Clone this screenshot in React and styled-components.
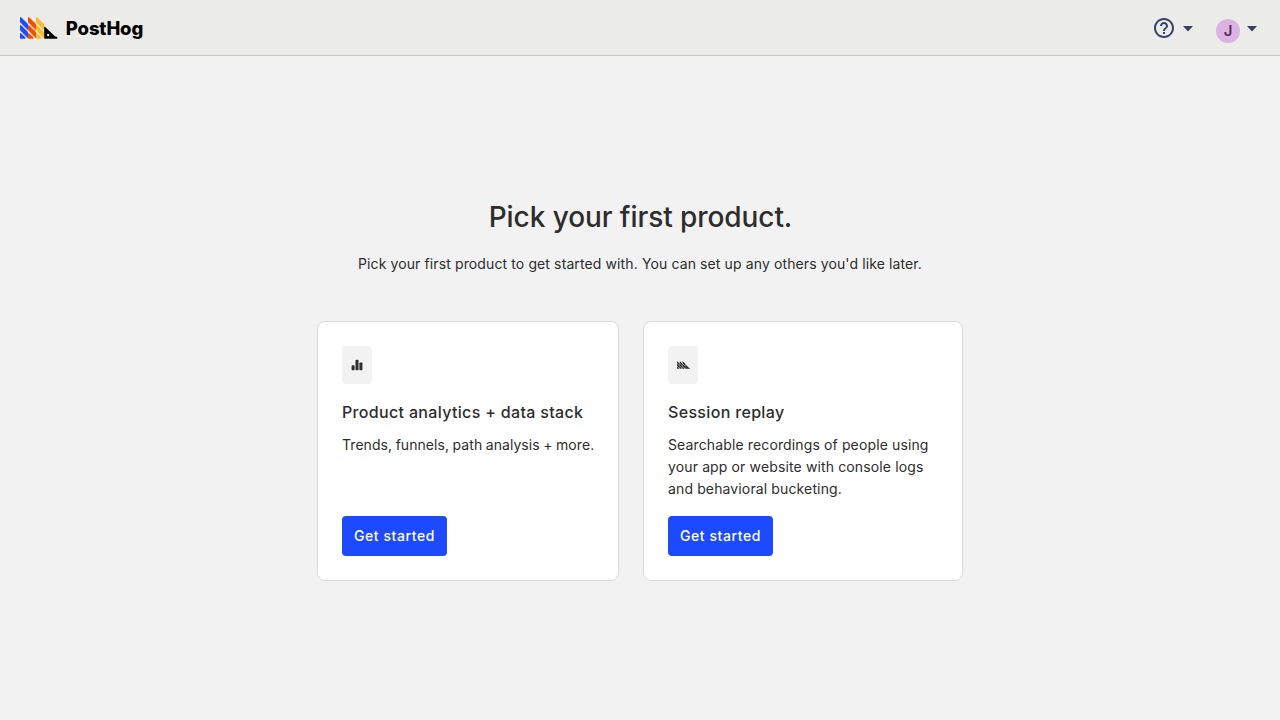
import React from 'react';
import styled, { createGlobalStyle } from 'styled-components';

const GlobalStyle = createGlobalStyle`
  *, *::before, *::after { box-sizing: border-box; }
  body {
    margin: 0;
    background: #f2f2f2;
    color: #2d2d2d;
    font-family: Inter, sans-serif;
    font-size: 14px;
    line-height: 22px;
    letter-spacing: 0.115px;
  }
  h1, h3, p { margin: 0; }
`;

const Page = styled.div`
  display: flex;
  flex-direction: column;
  height: 720px;
`;

const TopBar = styled.header`
  display: flex;
  align-items: center;
  justify-content: space-between;
  flex: none;
  height: 56px;
  padding: 0 23px 0 20px;
  background: #ebece8;
  border-bottom: 1px solid #c6c7c3;
`;

const Brand = styled.a`
  display: flex;
  align-items: center;
  gap: 7.8px;
  color: #000;
  svg { margin-top: 1px; }
`;

const Wordmark = styled.span`
  margin-top: 1px;
  font-size: 18.5px;
  font-weight: 800;
  letter-spacing: -0.12px;
`;

const Actions = styled.div`
  display: flex;
  align-items: center;
  gap: 23px;
`;

const MenuButton = styled.button`
  display: flex;
  align-items: center;
  gap: 7px;
  padding: 0;
  border: 0;
  background: none;
  color: #35416b;
  svg { display: block; }
`;

const CaretIcon = styled.svg`
  margin-top: 2px;
`;

const Avatar = styled.span`
  width: 24px;
  height: 24px;
  margin-top: 6px;
  border-radius: 50%;
  background: #dcb1e3;
  color: #572e5e;
  font: 600 15px/24px Inter, sans-serif;
  text-align: center;
`;

const Main = styled.main`
  display: flex;
  flex-direction: column;
  align-items: center;
  padding-top: 143px;
`;

const Title = styled.h1`
  padding-left: 1px;
  font-size: 28px;
  font-weight: 500;
  line-height: 36px;
  letter-spacing: -0.08px;
`;

const Subtitle = styled.p`
  margin-top: 18px;
`;

const Cards = styled.div`
  display: flex;
  gap: 24px;
  margin-top: 46px;
`;

const Card = styled.section`
  display: flex;
  flex-direction: column;
  align-items: flex-start;
  width: ${(p) => p.$width}px;
  height: 260px;
  padding: 24px;
  background: #fff;
  border: 1px solid #d9d9d9;
  border-radius: 8px;
`;

const IconTile = styled.div`
  display: flex;
  align-items: center;
  justify-content: center;
  width: 30px;
  height: 38px;
  border-radius: 4px;
  background: #f2f2f2;
`;

const CardTitle = styled.h3`
  margin-top: 16px;
  font-size: 16px;
  font-weight: 500;
  line-height: 24px;
  letter-spacing: 0.33px;
  white-space: nowrap;
`;

const CardText = styled.p`
  margin-top: 10px;
  white-space: ${(p) => (p.$singleLine ? 'nowrap' : 'normal')};
  letter-spacing: ${(p) => (p.$singleLine ? '0.06px' : '0.13px')};
  word-spacing: ${(p) => (p.$singleLine ? '-0.5px' : '0')};
`;

const StartButton = styled.button`
  height: 40px;
  width: 105px;
  margin-top: auto;
  padding: 0;
  border: 0;
  border-radius: 4px;
  background: #1d4aff;
  color: #fff;
  font: 500 14px/22px Inter, sans-serif;
  letter-spacing: 0.57px;
`;

const Spines = () => (
  <>
    <path d="M0 1Q0 .1 .5 .1Q.9 .1 1.4 .6L8 7V13.34L.3 5.6Q0 5.3 0 4.9Z" />
    <path d="M0 8.7Q0 7.9 .5 7.9Q.9 7.9 1.4 8.4L8 15V21.34L.3 13.6Q0 13.3 0 12.9Z" />
    <path d="M0 16.7Q0 15.9 .5 15.9Q.9 15.9 1.4 16.4L5.5 20.4Q6.3 21.8 4.9 21.8H.8Q0 21.8 0 21Z" />
  </>
);

function Logo() {
  return (
    <svg width="38" height="22" viewBox="0 0 38 22">
      <g fill="#1d4aff"><Spines /></g>
      <g fill="#f54e00" transform="translate(8 0)"><Spines /></g>
      <g fill="#f9bd2b" transform="translate(16 0)"><Spines /></g>
      <path fill="#000" d="M24.2 10.4Q24.2 9 25.2 9.9L34.6 18.9Q35.4 19.5 36.6 19.7Q37.4 19.9 37.4 20.7V21Q37.4 21.8 36.6 21.8H25Q24.2 21.8 24.2 21Z" />
      <circle cx="28.2" cy="18" r="1.2" fill="#ebece8" />
    </svg>
  );
}

const Caret = () => (
  <CaretIcon width="10" height="6" viewBox="0 0 10 6">
    <path d="M0 .1h10L5.5 4.9Q5 5.4 4.5 4.9Z" fill="#35416b" />
  </CaretIcon>
);

const HelpIcon = () => (
  <svg width="24" height="24" viewBox="0 0 24 24" fill="#35416b">
    <path d="M11 18h2v-2h-2v2zm1-16C6.48 2 2 6.48 2 12s4.48 10 10 10 10-4.48 10-10S17.52 2 12 2zm0 18c-4.41 0-8-3.59-8-8s3.59-8 8-8 8 3.59 8 8-3.59 8-8 8zm0-14c-2.21 0-4 1.79-4 4h2c0-1.1.9-2 2-2s2 .9 2 2c0 2-3 1.75-3 5h2c0-2.25 3-2.5 3-5 0-2.21-1.79-4-4-4z" />
  </svg>
);

const BarsIcon = () => (
  <svg width="12" height="12" viewBox="0 0 12 12" fill="#2d2d2d">
    <rect x=".6" y="6.3" width="3" height="5" rx=".8" />
    <rect x="4.5" y=".7" width="3" height="10.6" rx=".8" />
    <rect x="8.4" y="3.5" width="3" height="7.8" rx=".8" />
  </svg>
);

const ReplaySvg = styled.svg`
  margin-left: 1px;
`;

const ReplayIcon = () => (
  <ReplaySvg width="13" height="8" viewBox="0 0 38 22" fill="#2d2d2d">
    <Spines />
    <g transform="translate(8 0)"><Spines /></g>
    <g transform="translate(16 0)"><Spines /></g>
    <path d="M24.2 9L34.6 18.9L37.4 19.9V21.8H24.2Z" />
  </ReplaySvg>
);

const products = [
  {
    title: 'Product analytics + data stack',
    text: 'Trends, funnels, path analysis + more.',
    width: 302,
    singleLine: true,
    Icon: BarsIcon,
  },
  {
    title: 'Session replay',
    text: 'Searchable recordings of people using your app or website with console logs and behavioral bucketing.',
    width: 320,
    singleLine: false,
    Icon: ReplayIcon,
  },
];

export default function App() {
  return (
    <Page>
      <GlobalStyle />
      <TopBar>
        <Brand>
          <Logo />
          <Wordmark>PostHog</Wordmark>
        </Brand>
        <Actions>
          <MenuButton aria-label="Help"><HelpIcon /><Caret /></MenuButton>
          <MenuButton aria-label="Account"><Avatar>J</Avatar><Caret /></MenuButton>
        </Actions>
      </TopBar>
      <Main>
        <Title>Pick your first product.</Title>
        <Subtitle>Pick your first product to get started with. You can set up any others you'd like later.</Subtitle>
        <Cards>
          {products.map(({ title, text, width, singleLine, Icon }) => (
            <Card key={title} $width={width}>
              <IconTile><Icon /></IconTile>
              <CardTitle>{title}</CardTitle>
              <CardText $singleLine={singleLine}>{text}</CardText>
              <StartButton>Get started</StartButton>
            </Card>
          ))}
        </Cards>
      </Main>
    </Page>
  );
}
